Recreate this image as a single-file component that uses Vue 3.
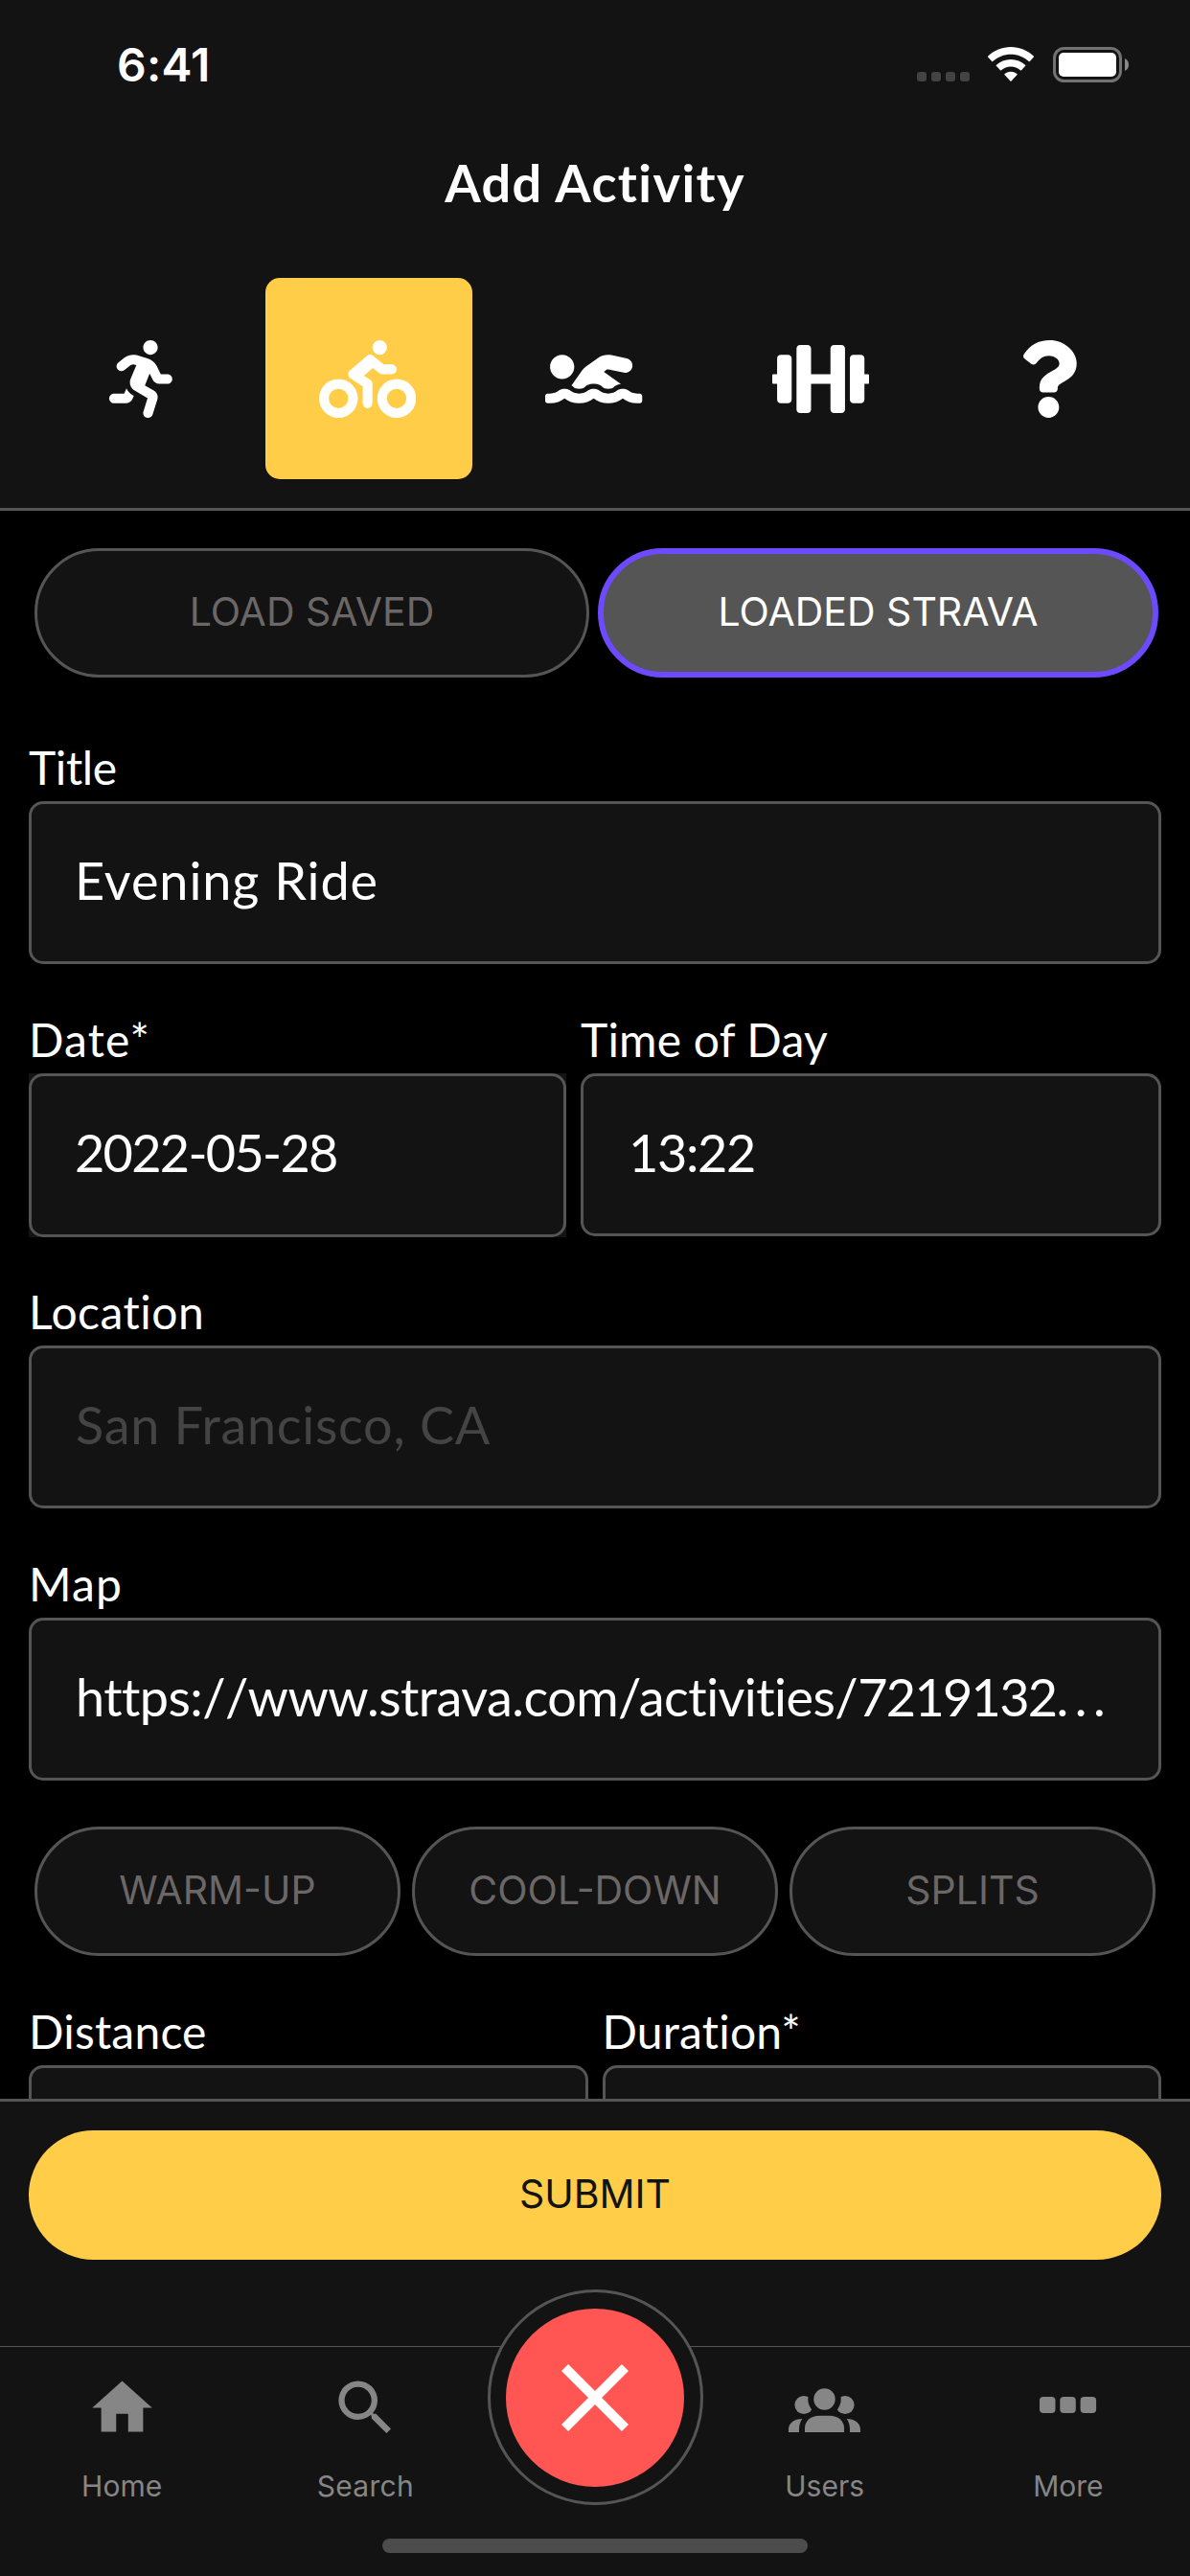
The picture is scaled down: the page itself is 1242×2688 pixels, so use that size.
<script setup>
import { ref } from 'vue'

const activities = [
  {
    id: 'run',
    width: 416,
    path: 'M272 96c26.51 0 48-21.49 48-48S298.51 0 272 0s-48 21.49-48 48 21.49 48 48 48zM113.69 317.47l-14.8 34.52H32c-17.67 0-32 14.33-32 32s14.33 32 32 32h77.45c19.25 0 36.58-11.44 44.11-29.09l8.79-20.52-10.67-6.3c-17.32-10.23-30.06-25.37-37.99-42.61zM384 223.99h-44.03l-26.06-53.25c-12.5-25.55-35.45-44.23-61.78-50.94l-71.08-21.14c-28.3-6.8-57.77-.55-80.84 17.14l-39.67 30.41c-14.03 10.75-16.69 30.83-5.94 44.86s30.84 16.69 44.86 5.94l39.69-30.41c7.67-5.89 17.44-8 25.27-6.14l14.7 4.37-37.46 87.39c-12.62 29.48-1.31 64.01 26.3 80.31l84.98 50.17-27.47 87.73c-5.28 16.86 4.11 34.82 20.97 40.09 3.19 1 6.41 1.48 9.58 1.48 13.61 0 26.23-8.77 30.52-22.45l31.64-101.06c5.91-20.77-2.89-43.08-21.64-54.39l-61.24-36.14 31.31-78.28 20.27 41.43c8 16.34 24.92 26.89 43.11 26.89H384c17.67 0 32-14.33 32-32s-14.33-31.99-32-31.99z',
  },
  {
    id: 'bike',
    width: 640,
    path: 'M400 96a48 48 0 1 0-48-48 48 48 0 0 0 48 48zm-4 121a31.9 31.9 0 0 0 20 7h64a32 32 0 0 0 0-64h-52.78L356 103a31.94 31.94 0 0 0-40.81.68l-112 96a32 32 0 0 0 3.08 50.92L288 305.12V416a32 32 0 0 0 64 0V288a32 32 0 0 0-14.25-26.62l-41.36-27.57 58.25-49.92zm116 39a128 128 0 1 0 128 128 128 128 0 0 0-128-128zm0 192a64 64 0 1 1 64-64 64 64 0 0 1-64 64zM128 256a128 128 0 1 0 128 128 128 128 0 0 0-128-128zm0 192a64 64 0 1 1 64-64 64 64 0 0 1-64 64z',
  },
  {
    id: 'swim',
    width: 640,
    path: 'M189.61 310.58c3.54 3.26 15.27 9.42 34.39 9.42s30.86-6.16 34.39-9.42c16.02-14.77 34.5-22.58 53.46-22.58h16.3c18.96 0 37.45 7.81 53.46 22.58 3.54 3.26 15.27 9.42 34.39 9.42s30.86-6.16 34.39-9.42c14.86-13.71 31.88-21.12 49.39-22.16l-112.84-80.6 18-12.86c3.64-2.58 8.28-3.52 12.62-2.61l100.35 21.53c25.91 5.53 51.44-10.97 57-36.88 5.55-25.92-10.95-51.44-36.88-57L437.68 98.47c-30.73-6.58-63.02.12-88.56 18.38l-80.02 57.17c-10.38 7.39-19.36 16.44-26.72 26.94L173.75 299c5.47 3.23 10.82 6.93 15.86 11.58zM624 352h-16c-26.04 0-45.8-8.42-56.09-17.9-8.9-8.21-19.66-14.1-31.77-14.1h-16.3c-12.11 0-22.87 5.89-31.77 14.1C461.8 343.58 442.04 352 416 352s-45.8-8.42-56.09-17.9c-8.9-8.21-19.66-14.1-31.77-14.1h-16.3c-12.11 0-22.87 5.89-31.77 14.1C269.8 343.58 250.04 352 224 352s-45.8-8.42-56.09-17.9c-8.9-8.21-19.66-14.1-31.77-14.1h-16.3c-12.11 0-22.87 5.89-31.77 14.1C77.8 343.58 58.04 352 32 352H16c-8.84 0-16 7.16-16 16v32c0 8.84 7.16 16 16 16h16c38.62 0 72.72-12.19 96-31.84 23.28 19.66 57.38 31.84 96 31.84s72.72-12.19 96-31.84c23.28 19.66 57.38 31.84 96 31.84s72.72-12.19 96-31.84c23.28 19.66 57.38 31.84 96 31.84h16c8.84 0 16-7.16 16-16v-32c0-8.84-7.16-16-16-16zm-512-96c44.18 0 80-35.82 80-80s-35.82-80-80-80-80 35.82-80 80 35.82 80 80 80z',
  },
  {
    id: 'lift',
    width: 640,
    path: 'M104 96H56c-13.3 0-24 10.7-24 24v104H8c-4.4 0-8 3.6-8 8v48c0 4.4 3.6 8 8 8h24v104c0 13.3 10.7 24 24 24h48c13.3 0 24-10.7 24-24V120c0-13.3-10.7-24-24-24zm528 128h-24V120c0-13.3-10.7-24-24-24h-48c-13.3 0-24 10.7-24 24v272c0 13.3 10.7 24 24 24h48c13.3 0 24-10.7 24-24V288h24c4.4 0 8-3.6 8-8v-48c0-4.4-3.6-8-8-8zM456 32h-48c-13.3 0-24 10.7-24 24v168H256V56c0-13.3-10.7-24-24-24h-48c-13.3 0-24 10.7-24 24v400c0 13.3 10.7 24 24 24h48c13.3 0 24-10.7 24-24V288h128v168c0 13.3 10.7 24 24 24h48c13.3 0 24-10.7 24-24V56c0-13.3-10.7-24-24-24z',
  },
  {
    id: 'other',
    width: 384,
    path: 'M202.021 0C122.202 0 70.503 32.703 29.914 91.026c-7.363 10.58-5.093 25.086 5.178 32.874l43.138 32.709c10.373 7.865 25.132 6.026 33.253-4.148 25.049-31.381 43.63-49.449 82.757-49.449 30.764 0 68.816 19.799 68.816 49.631 0 22.552-18.617 34.134-48.993 51.164-35.423 19.86-82.299 44.576-82.299 106.405V320c0 13.255 10.745 24 24 24h72.471c13.255 0 24-10.745 24-24v-5.773c0-42.86 125.268-44.645 125.268-160.627C377.504 66.256 286.902 0 202.021 0zM192 373.459c-38.196 0-69.271 31.075-69.271 69.271 0 38.195 31.075 69.27 69.271 69.27s69.271-31.075 69.271-69.271-31.075-69.27-69.271-69.27z',
  },
]
const selected = ref('bike')
</script>

<template>
  <div class="screen">
    <header class="header">
      <div class="status">
        <span class="clock">6:41</span>
        <div class="indicators">
          <div class="signal"><i v-for="n in 4" :key="n"></i></div>
          <svg class="wifi" width="48" height="36" viewBox="0 0 48 36">
            <path d="M24 0C33 0 41.500 3.500 48 9.700Q48.300 10.100 47.900 10.600L43.800 15Q43.300 15.400 42.800 15C37.700 10.300 31.100 7.700 24 7.700S10.300 10.300 5.200 15Q4.700 15.400 4.200 15L.1 10.600Q-.3 10.100 0 9.700C6.500 3.500 15 0 24 0z" />
            <path d="M24 12.900C29.800 12.900 35.200 15.100 39.300 18.900Q39.600 19.300 39.200 19.800L35 24.200Q34.500 24.600 34 24.200C31.300 21.900 27.800 20.500 24 20.500S16.700 21.900 14 24.200Q13.500 24.600 13 24.200L8.800 19.800Q8.400 19.300 8.700 18.900C12.800 15.100 18.200 12.900 24 12.900z" />
            <path d="M24 25.700C26.600 25.700 28.900 26.600 30.600 28.200Q31 28.700 30.600 29.100L24.600 35.500Q24 36 23.400 35.500L17.400 29.100Q17 28.700 17.400 28.200C19.100 26.600 21.400 25.700 24 25.700z" />
          </svg>
          <svg class="battery" width="80" height="37" viewBox="0 0 80 37">
            <rect x="1.500" y="1.500" width="69" height="34" rx="10" fill="none" stroke="#727272" stroke-width="3" />
            <rect x="6" y="6" width="60" height="25" rx="5" fill="#fff" />
            <path d="M75 12q4 2 4 6.500t-4 6.500z" fill="#8a8a8a" />
          </svg>
        </div>
      </div>
      <h1 class="heading">Add Activity</h1>
      <nav class="types">
        <button
          v-for="a in activities"
          :key="a.id"
          class="type"
          :class="[a.id, { active: a.id === selected }]"
          @click="selected = a.id"
        >
          <svg height="81" :width="(a.width * 81) / 512" :viewBox="`0 0 ${a.width} 512`"><path :d="a.path" /></svg>
        </button>
      </nav>
    </header>

    <main class="form">
      <div class="row loads">
        <button class="pill load">LOAD SAVED</button>
        <button class="pill loaded">LOADED STRAVA</button>
      </div>

      <div class="field">
        <label class="tight">Title</label>
        <div class="input">Evening Ride</div>
      </div>

      <div class="row times">
        <div class="field date">
          <label class="wide">Date*</label>
          <div class="plate"><div class="input digits">2022-05-28</div></div>
        </div>
        <div class="field grow">
          <label>Time of Day</label>
          <div class="input digits clocktime">13:22</div>
        </div>
      </div>

      <div class="field">
        <label class="mid">Location</label>
        <div class="input placeholder">San Francisco, CA</div>
      </div>

      <div class="field">
        <label class="wide">Map</label>
        <div class="input url"><span>https:</span><span class="slashes">//</span><span>www.strava.com/activities/</span><span class="num">7219132</span><span class="dots">...</span></div>
      </div>

      <div class="row extras">
        <button class="pill">WARM-UP</button>
        <button class="pill">COOL-DOWN</button>
        <button class="pill">SPLITS</button>
      </div>

      <div class="row metrics">
        <div class="field grow">
          <label>Distance</label>
          <div class="input"></div>
        </div>
        <div class="field grow">
          <label>Duration*</label>
          <div class="input"></div>
        </div>
      </div>
    </main>

    <section class="submit-bar">
      <button class="submit">SUBMIT</button>
    </section>

    <footer class="tabs">
      <div class="tab">
        <svg viewBox="0 0 24 24"><path d="M10 20v-6h4v6h5v-8h3L12 3 2 12h3v8z" /></svg>
        <span>Home</span>
      </div>
      <div class="tab search">
        <svg viewBox="0 0 24 24"><path d="M15.500 14h-.79l-.28-.27A6.471 6.471 0 0 0 16 9.500 6.500 6.500 0 1 0 9.500 16c1.610 0 3.090-.59 4.230-1.570l.27.28v.79l5 4.990L20.490 19l-4.990-5zm-6 0C7.010 14 5 11.990 5 9.500S7.010 5 9.500 5 14 7.010 14 9.500 11.990 14 9.500 14z" /></svg>
        <span>Search</span>
      </div>
      <div class="fab">
        <div class="fab-disc">
          <svg width="120" height="120" viewBox="0 0 24 24"><path d="M19 6.410L17.590 5 12 10.590 6.410 5 5 6.410 10.590 12 5 17.590 6.410 19 12 13.410 17.590 19 19 17.590 13.410 12z" /></svg>
        </div>
      </div>
      <div class="tab">
        <svg viewBox="0 0 75 75">
          <circle cx="16" cy="34.500" r="9.600" />
          <circle cx="59" cy="34.500" r="9.600" />
          <circle class="gap" cx="37.500" cy="28.500" r="17.200" />
          <circle cx="37.500" cy="28.500" r="11.200" />
          <path d="M17 63V58.500C17 51 23.500 45.700 32 45.700H43C51.500 45.700 58 51 58 58.500V63z" />
          <path d="M0 63V60C0 53.500 6 49 14.300 49C12 52 11 56 11 60V63z" />
          <path d="M75 63V60C75 53.500 69 49 60.700 49C63 52 64 56 64 60V63z" />
        </svg>
        <span>Users</span>
      </div>
      <div class="tab">
        <svg viewBox="0 0 75 75">
          <rect x="8" y="26" width="16.500" height="17" rx="4" />
          <rect x="29.300" y="26" width="16.500" height="17" rx="4" />
          <rect x="50.600" y="26" width="16.500" height="17" rx="4" />
        </svg>
        <span>More</span>
      </div>
      <div class="home-bar"></div>
    </footer>
  </div>
</template>

<style>
body {
  margin: 0;
  background: #000;
}
</style>

<style scoped>
.screen {
  width: 1242px;
  height: 2688px;
  display: flex;
  flex-direction: column;
  overflow: hidden;
  background: #000;
  color: #fff;
  font-family: Lato, "Liberation Sans", sans-serif;
  font-variant-ligatures: none;
}
.screen * {
  box-sizing: border-box;
}
button {
  margin: 0;
  padding: 0;
  border: 0;
  font: inherit;
  color: inherit;
  background: none;
}

/* header */
.header {
  height: 533px;
  flex: none;
  background: #131313;
  border-bottom: 3px solid #555;
}
.status {
  height: 132px;
  padding: 39px 63px 0 122px;
  display: flex;
  justify-content: space-between;
}
.clock {
  font: 600 48px/58px Inter, sans-serif;
  letter-spacing: 0.2px;
}
.indicators {
  display: flex;
  padding-top: 10px;
}
.signal {
  display: flex;
  gap: 5px;
  padding-top: 26px;
}
.signal i {
  width: 10px;
  height: 10px;
  border-radius: 3px;
  background: #434343;
}
.wifi {
  margin-left: 19px;
  fill: #fff;
}
.battery {
  margin-left: 20px;
}
.heading {
  margin: 26px 0 0;
  height: 132px;
  text-align: center;
  font-size: 54px;
  font-weight: 700;
  line-height: 65px;
  letter-spacing: 1.4px;
}
.types {
  display: flex;
  justify-content: center;
  gap: 20.4px;
}
.type {
  width: 216px;
  height: 210px;
  border-radius: 15px;
  display: flex;
  align-items: center;
  justify-content: center;
}
.type.active {
  background: #ffcd47;
}
.type svg {
  margin-right: 2px;
  fill: #fff;
}
.type.other svg {
  margin: 0 0 0 2px;
}

/* form */
.form {
  height: 1657px;
  flex: none;
  overflow: hidden;
  padding: 39px 30px 0;
  display: flex;
  flex-direction: column;
  gap: 48px;
}
.row {
  display: flex;
}
.loads {
  gap: 9px;
  padding: 0 3px 0 6px;
  margin-bottom: 15px;
}
.extras {
  gap: 12px;
  padding: 0 6px;
}
.times,
.metrics {
  gap: 15px;
}
.pill {
  flex: 1;
  height: 135px;
  padding-bottom: 3px;
  border: 3px solid #555;
  border-radius: 68px;
  background: #131313;
  color: #6b6767;
  font: 400 41px/50px Inter, sans-serif;
}
.pill.load {
  flex: 0 0 579px;
}
.pill.loaded {
  border: 6px solid #6e4aff;
  background: #555;
  color: #fff;
}
.field {
  display: flex;
  flex-direction: column;
  gap: 6px;
}
.grow {
  flex: 1;
}
.date {
  width: 561px;
  height: 236px;
}
label {
  padding-top: 2px;
  font-size: 48px;
  line-height: 58px;
  letter-spacing: 0.2px;
}
label.tight {
  letter-spacing: -0.4px;
}
label.mid {
  letter-spacing: 0.5px;
}
label.wide {
  letter-spacing: 1.2px;
}
.input {
  height: 170px;
  padding: 0 0 6px 45px;
  border: 3px solid #555;
  border-radius: 15px;
  background: #131313;
  display: flex;
  align-items: center;
  white-space: pre;
  font-size: 54px;
  letter-spacing: 0.93px;
}
.plate {
  height: 171px;
  background: #131313;
}
.plate .input {
  height: 171px;
  padding-bottom: 7px;
}
.digits {
  letter-spacing: -1.7px;
}
.clocktime {
  padding-left: 47px;
  letter-spacing: -1.36px;
}
.placeholder {
  color: #444;
  padding-left: 46px;
  letter-spacing: 0.71px;
}
.url {
  padding-left: 46px;
  letter-spacing: -0.55px;
}
.url .slashes {
  font-kerning: none;
  letter-spacing: -0.8px;
}
.url .num {
  letter-spacing: -1.7px;
}
.url .dots {
  letter-spacing: 6.5px;
}

/* submit */
.submit-bar {
  height: 258px;
  flex: none;
  padding: 30px 30px 0;
  border-top: 3px solid #555;
  background: #131313;
}
.submit {
  display: block;
  width: 100%;
  height: 135px;
  padding-bottom: 3px;
  border-radius: 68px;
  background: #ffcd47;
  color: #131313;
  font: 400 41px/50px Inter, sans-serif;
}

/* tab bar */
.tabs {
  position: relative;
  height: 240px;
  flex: none;
  display: flex;
  border-top: 1px solid #555;
  background: #131313;
}
.tab {
  flex: 1;
  padding-top: 26px;
  display: flex;
  flex-direction: column;
  align-items: center;
  gap: 26px;
  color: #868686;
  font: 400 30px/36px Inter, sans-serif;
}
.tab svg {
  width: 75px;
  height: 75px;
  fill: #868686;
}
.tab .gap {
  fill: #131313;
}
.search {
  letter-spacing: 0.3px;
}
.fab {
  width: 225px;
  height: 225px;
  margin-top: -60px;
  border: 3px solid #555;
  border-radius: 50%;
  background: #131313;
  display: flex;
  align-items: center;
  justify-content: center;
}
.fab-disc {
  width: 186px;
  height: 186px;
  border-radius: 50%;
  background: #ff5654;
  display: flex;
  align-items: center;
  justify-content: center;
}
.fab svg {
  fill: #fff;
}
.home-bar {
  position: absolute;
  left: 399px;
  bottom: 24px;
  width: 444px;
  height: 15px;
  border-radius: 8px;
  background: #4c4c4c;
}
</style>
